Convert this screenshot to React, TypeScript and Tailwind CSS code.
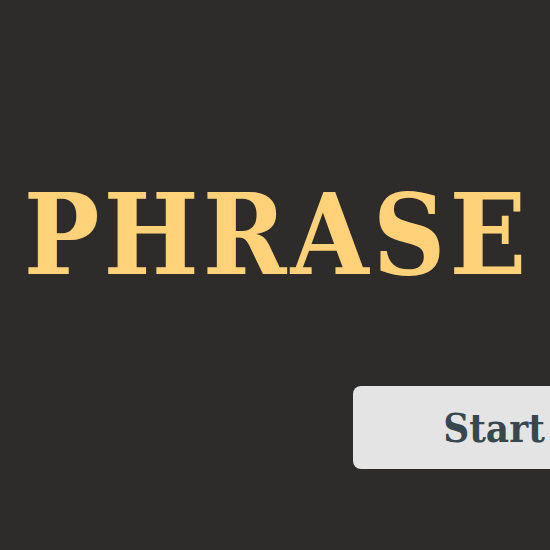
export default function App() {
  return (
    <div className="w-[550px] h-[550px] bg-[#2e2c2b] overflow-hidden flex flex-col font-['DejaVu_Serif',serif]">
      <h1 className="mt-[170px] pl-[4px] text-center text-[112px] leading-[130px] font-bold font-stretch-condensed text-[#ffd27a] tracking-[4px]">
        PHRASE
      </h1>
      <button className="mt-[86px] ml-[353px] w-[282px] h-[83px] shrink-0 rounded-[8px] bg-[#e4e4e4] text-[#37474f] text-[40px] font-bold font-stretch-condensed text-center">
        Start
      </button>
    </div>
  );
}
